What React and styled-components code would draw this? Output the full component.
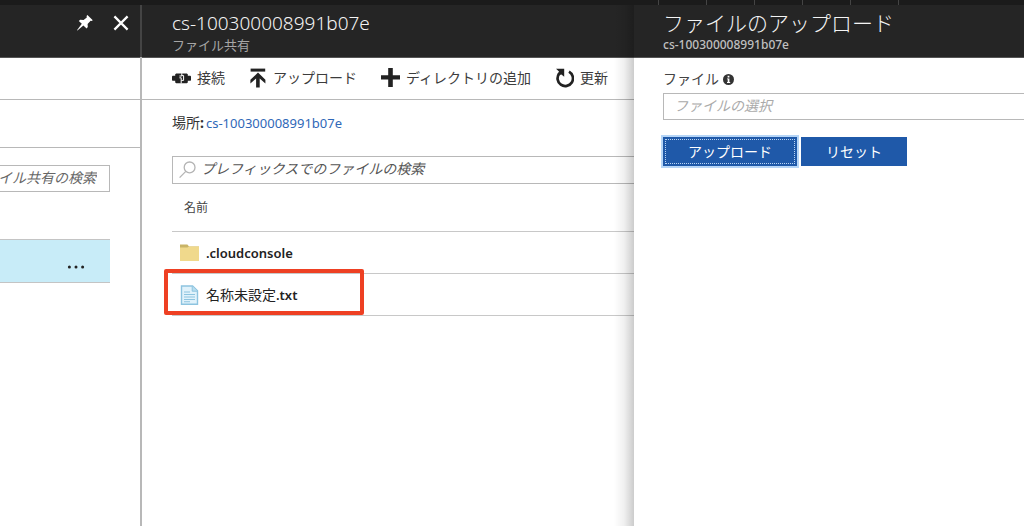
import React, { useState } from "react";
import styled, { createGlobalStyle } from "styled-components";

function App() {
    const [prefix, setPrefix] = useState("");
    const [shareFilter, setShareFilter] = useState("");

    return (
        <>
            <GlobalStyle />
            <Portal>
                <TopBar>
                    {[0, 1, 2, 3, 4, 5].map((slot) => (
                        <TopBarSlot key={slot} />
                    ))}
                </TopBar>
                <Blades>
                    <Blade $divided>
                        <BladeActions>
                            <IconButton aria-label="ピン留め">
                                <PinIcon />
                            </IconButton>
                            <IconButton aria-label="閉じる">
                                <CloseIcon />
                            </IconButton>
                        </BladeActions>
                        <Toolbar />
                        <Summary />
                        <ShareList>
                            <ShareSearch
                                aria-label="ファイル共有の検索"
                                placeholder="ファイル共有の検索"
                                value={shareFilter}
                                onChange={(e) => setShareFilter(e.target.value)}
                            />
                            <ShareRow>
                                <IconButton aria-label="その他">
                                    <DotsIcon />
                                </IconButton>
                            </ShareRow>
                        </ShareList>
                    </Blade>
                    <Blade>
                        <BladeHeader>
                            <Title $latin>cs-100300008991b07e</Title>
                            <Subtitle>ファイル共有</Subtitle>
                        </BladeHeader>
                        <Toolbar>
                            <ToolButton>
                                <ConnectIcon />
                                接続
                            </ToolButton>
                            <ToolButton>
                                <UploadIcon />
                                アップロード
                            </ToolButton>
                            <ToolButton>
                                <PlusIcon />
                                ディレクトリの追加
                            </ToolButton>
                            <ToolButton>
                                <RefreshIcon />
                                更新
                            </ToolButton>
                        </Toolbar>
                        <Content>
                            <Location>
                                場所<b>:</b>
                                <a href="#root">cs-100300008991b07e</a>
                            </Location>
                            <SearchBox>
                                <SearchIcon />
                                <SearchInput
                                    aria-label="プレフィックスでのファイルの検索"
                                    placeholder="プレフィックスでのファイルの検索"
                                    value={prefix}
                                    onChange={(e) => setPrefix(e.target.value)}
                                />
                            </SearchBox>
                            <FileTable>
                                <thead>
                                    <tr>
                                        <HeadCell>名前</HeadCell>
                                    </tr>
                                </thead>
                                <tbody>
                                    <tr>
                                        <FileCell>
                                            <FileName>
                                                <FolderIcon />
                                                <b>.cloudconsole</b>
                                            </FileName>
                                        </FileCell>
                                    </tr>
                                    <tr>
                                        <FileCell>
                                            <FileName>
                                                <TextFileIcon />
                                                <span>
                                                    名称未設定<b>.txt</b>
                                                </span>
                                            </FileName>
                                            <Highlight />
                                        </FileCell>
                                    </tr>
                                </tbody>
                            </FileTable>
                        </Content>
                    </Blade>
                    <UploadBlade>
                        <BladeHeader>
                            <Title>ファイルのアップロード</Title>
                            <Subtitle $strong>cs-100300008991b07e</Subtitle>
                        </BladeHeader>
                        <UploadForm onSubmit={(e) => e.preventDefault()}>
                            <FieldLabel htmlFor="file">
                                ファイル
                                <InfoIcon />
                            </FieldLabel>
                            <FileInput id="file" placeholder="ファイルの選択" readOnly />
                            <FormButtons>
                                <FormButton type="submit" $focused>
                                    アップロード
                                </FormButton>
                                <FormButton type="reset">リセット</FormButton>
                            </FormButtons>
                        </UploadForm>
                    </UploadBlade>
                </Blades>
            </Portal>
        </>
    );
}

const PinIcon = () => (
    <svg width="18" height="18" viewBox="0 0 18 18" fill="#fff">
        <path d="M11.4 1 L16.8 6.2 L15.6 7 L14.6 6.8 L11.6 10 L11.8 13 L10.6 14.4 L7.4 11.4 L1.4 16.6 L1 16.2 L5.8 9.8 L2.8 7 L4.2 5.8 L7.6 6 L10.8 3.4 L10.6 2 Z" />
    </svg>
);

const CloseIcon = () => (
    <svg width="18" height="18" viewBox="0 0 18 18" fill="none" stroke="#fff" strokeWidth="2.2">
        <path d="M2.4 2.4 L15.6 15.6 M15.6 2.4 L2.4 15.6" />
    </svg>
);

const DotsIcon = () => (
    <svg width="18" height="4" viewBox="0 0 18 4" fill="#222">
        <circle cx="2.4" cy="2" r="1.5" />
        <circle cx="9" cy="2" r="1.5" />
        <circle cx="15.6" cy="2" r="1.5" />
    </svg>
);

const ConnectIcon = () => (
    <svg width="19" height="18" viewBox="0 0 19 18">
        <path
            fill="#222"
            d="M0 7.4 L0.6 6.8 H3.2 V5.2 L4.2 4.4 H14.8 L15.8 5.2 V6.8 H18.4 L19 7.4 V11.2 L18.4 11.8 H15.8 V13.4 L14.8 14.2 H4.2 L3.2 13.4 V11.8 H0.6 L0 11.2 Z"
        />
        <path
            d="M9.8 4.2 V7 H7.4 M7.4 8.8 H9.2 V14.4 M9.8 6.6 H11.6 V11.4 H9.4"
            fill="none"
            stroke="#fff"
            strokeWidth="1"
        />
    </svg>
);

const UploadIcon = () => (
    <svg width="18" height="20" viewBox="0 0 18 20" fill="#222">
        <path d="M1.6 0.6 H16.2 V3.6 H1.6 Z" />
        <path d="M9 4.6 L16.4 11.8 V15.6 L10.7 10.4 V19.4 H7.1 V10.4 L1.4 15.6 V11.8 Z" />
    </svg>
);

const PlusIcon = () => (
    <svg width="19" height="19" viewBox="0 0 19 19" fill="#222">
        <path d="M7.2 0 H11.8 V7.2 H19 V11.6 H11.8 V19 H7.2 V11.6 H0 V7.2 H7.2 Z" />
    </svg>
);

const RefreshIcon = () => (
    <svg width="19" height="20" viewBox="0 0 19 20">
        <path d="M14 3.6 A7.7 7.7 0 1 1 4.2 5.6" fill="none" stroke="#222" strokeWidth="2.7" />
        <path d="M1 0.8 H9.2 V8.8 L6.4 6.6 L3.2 7.4 L2.6 5.8 L4 3.6 Z" fill="#222" />
    </svg>
);

const SearchIcon = () => (
    <svg width="18" height="18" viewBox="0 0 18 18" fill="none" stroke="#b4b4b4" strokeWidth="1.3">
        <circle cx="10.6" cy="6.4" r="5.4" />
        <path d="M6.8 10.4 L0.6 16.6" />
    </svg>
);

const FolderIcon = () => (
    <svg width="19" height="19" viewBox="0 0 19 19">
        <path d="M0 1.4 H7.4 L9 3.4 H19 V18 H0 Z" fill="#c9b467" />
        <path d="M0 4.6 H7.4 L9 3.4 H19 V18 H0 Z" fill="#f0d98c" />
    </svg>
);

const TextFileIcon = () => (
    <svg width="19" height="20" viewBox="0 0 19 20">
        <path d="M1.5 1 H12.6 L17.5 5.8 V19.2 H1.5 Z" fill="#e0f2fb" stroke="#8dc4e0" strokeWidth="1.4" />
        <path d="M12.2 1 V6.2 H17.5" fill="#b9deef" stroke="#8dc4e0" />
        <path d="M4 7 H10 M4 9.5 H15 M4 12 H15 M4 14.5 H15 M4 16.8 H10" stroke="#8dc4e0" strokeWidth="1.1" />
    </svg>
);

const InfoIcon = () => (
    <svg width="11" height="11" viewBox="0 0 11 11">
        <circle cx="5.5" cy="5.5" r="5.5" fill="#333" />
        <path d="M4.6 1.8 H6.4 V3.4 H4.6 Z M4 4.4 H6.4 V8 H7.2 V9 H4 V8 H4.7 V5.3 H4 Z" fill="#fff" />
    </svg>
);

const GlobalStyle = createGlobalStyle`
    * {
        box-sizing: border-box;
    }
    body {
        margin: 0;
        background: #fff;
        color: #333;
        font-family: "Noto Sans", "Noto Sans CJK JP", sans-serif;
        font-size: 14px;
        line-height: 20px;
        overflow-x: hidden;
    }
    button, input {
        font: inherit;
    }
    svg {
        display: block;
        flex-shrink: 0;
    }
`;
const Portal = styled.div`
    display: flex;
    flex-direction: column;
    min-height: 100vh;
`;
const TopBar = styled.div`
    display: flex;
    height: 5px;
    padding-left: 658px;
    background: #1b1b1b;
`;
const TopBarSlot = styled.span`
    width: 48px;
    border-left: 1px solid #444;
`;
const Blades = styled.div`
    flex: 1;
    display: grid;
    grid-template-columns: 142px 492px minmax(0, 1fr);
`;
const Blade = styled.section`
    min-width: 0;
    ${(props) =>
        props.$divided &&
        `
        padding-right: 2px;
        background: linear-gradient(#444 0 52px, #b8b8b8 52px) right / 2px 100% no-repeat;
    `}
`;
const BladeHeader = styled.header`
    display: flex;
    flex-direction: column;
    height: 53px;
    padding: 4px 0 0 30px;
    background: #252525;
    border-bottom: 1px solid #555;
    white-space: nowrap;
`;
const BladeActions = styled(BladeHeader)`
    flex-direction: row;
    justify-content: flex-end;
    gap: 18px;
    padding: 9px 10px 0 0;
`;
const UploadBlade = styled.section`
    position: relative;
    min-width: 0;
    background: #fff;
    &::before {
        content: "";
        position: absolute;
        top: 0;
        bottom: 0;
        right: 100%;
        width: 20px;
        background: linear-gradient(to right, rgba(0, 0, 0, 0), rgba(0, 0, 0, 0.06) 50%, rgba(0, 0, 0, 0.2));
    }
    ${BladeHeader} {
        padding-left: 29px;
    }
`;
const Title = styled.h2`
    margin: 0;
    color: #f4f4f4;
    font-size: ${(props) => (props.$latin ? "19px" : "21px")};
    font-weight: 300;
    line-height: 28px;
`;
const Subtitle = styled.span`
    color: ${(props) => (props.$strong ? "#c0c0c0" : "#a6a6a6")};
    font-size: ${(props) => (props.$strong ? "12px" : "13px")};
    font-weight: ${(props) => (props.$strong ? 500 : 400)};
    line-height: 16px;
`;
const IconButton = styled.button`
    display: flex;
    align-items: flex-start;
    padding: 0;
    border: none;
    background: none;
    cursor: pointer;
`;
const Toolbar = styled.div`
    display: flex;
    align-items: center;
    gap: 24px;
    height: 42px;
    padding: 0 0 2px 30px;
    border-bottom: 1px solid #b8b8b8;
`;
const ToolButton = styled.button`
    display: flex;
    align-items: center;
    gap: 6px;
    padding: 0;
    border: none;
    background: none;
    color: #3c3c3c;
    white-space: nowrap;
    cursor: pointer;
`;
const Summary = styled.div`
    height: 48px;
    border-bottom: 1px solid #b8b8b8;
`;
const ShareList = styled.div`
    display: flex;
    flex-direction: column;
    align-items: flex-end;
    gap: 47px;
    padding: 17px 30px 0 0;
    overflow: hidden;
`;
const ShareSearch = styled.input`
    width: 156px;
    height: 27px;
    padding: 0 12px 2px 15px;
    border: 1px solid #b8b8b8;
    outline: none;
    &::placeholder {
        color: #666;
        font-style: italic;
    }
`;
const ShareRow = styled.div`
    display: flex;
    justify-content: flex-end;
    width: 156px;
    height: 44px;
    padding: 25px 25px 0 0;
    background: #c8ecf8;
    border-top: 1px solid #c4c4c4;
    border-bottom: 1px solid #c4c4c4;
`;
const Content = styled.div`
    padding: 13px 0 0 30px;
`;
const Location = styled.div`
    display: flex;
    align-items: baseline;
    a {
        margin-left: 2px;
        color: #2f68b8;
        font-size: 13px;
        text-decoration: none;
    }
`;
const SearchBox = styled.div`
    display: flex;
    align-items: center;
    gap: 4px;
    height: 28px;
    margin-top: 23px;
    padding-left: 6px;
    border: 1px solid #b8b8b8;
    border-right: none;
`;
const SearchInput = styled.input`
    flex: 1;
    min-width: 0;
    padding: 0 0 2px;
    border: none;
    outline: none;
    &::placeholder {
        color: #555;
        font-style: italic;
    }
`;
const FileTable = styled.table`
    width: 100%;
    border-collapse: separate;
    border-spacing: 0;
`;
const HeadCell = styled.th`
    height: 48px;
    padding: 0 12px;
    border-bottom: 1px solid #c8c8c8;
    color: #444;
    font-size: 12px;
    font-weight: 400;
    text-align: left;
`;
const FileCell = styled.td`
    position: relative;
    height: 42px;
    padding: 0 8px;
    border-bottom: 1px solid #c8c8c8;
`;
const FileName = styled.div`
    display: flex;
    align-items: center;
    gap: 7px;
    color: #222;
    b {
        font-size: 13px;
        font-weight: 600;
    }
`;
const Highlight = styled.span`
    position: absolute;
    top: -5px;
    left: -8px;
    width: 200px;
    height: 46px;
    border: 4px solid #ee4023;
    border-radius: 2px;
`;
const UploadForm = styled.form`
    display: flex;
    flex-direction: column;
    padding: 11px 0 0 29px;
`;
const FieldLabel = styled.label`
    display: flex;
    align-items: center;
    gap: 4px;
    color: #444;
`;
const FileInput = styled.input`
    height: 27px;
    margin-top: 4px;
    padding: 0 10px 2px;
    border: 1px solid #b8b8b8;
    border-right: none;
    outline: none;
    &::placeholder {
        color: #aaa;
        font-style: italic;
    }
`;
const FormButtons = styled.div`
    display: flex;
    gap: 4px;
    margin-top: 17px;
`;
const FormButton = styled.button`
    height: 29px;
    padding: 0 25px;
    border: none;
    background: #1f59a9;
    color: #fff;
    cursor: pointer;
    ${(props) =>
        props.$focused &&
        `
        outline: 1px dotted #b9d4f4;
        outline-offset: -3px;
        box-shadow: 0 0 0 2px #b5d5f7;
    `}
`;

export default App;
